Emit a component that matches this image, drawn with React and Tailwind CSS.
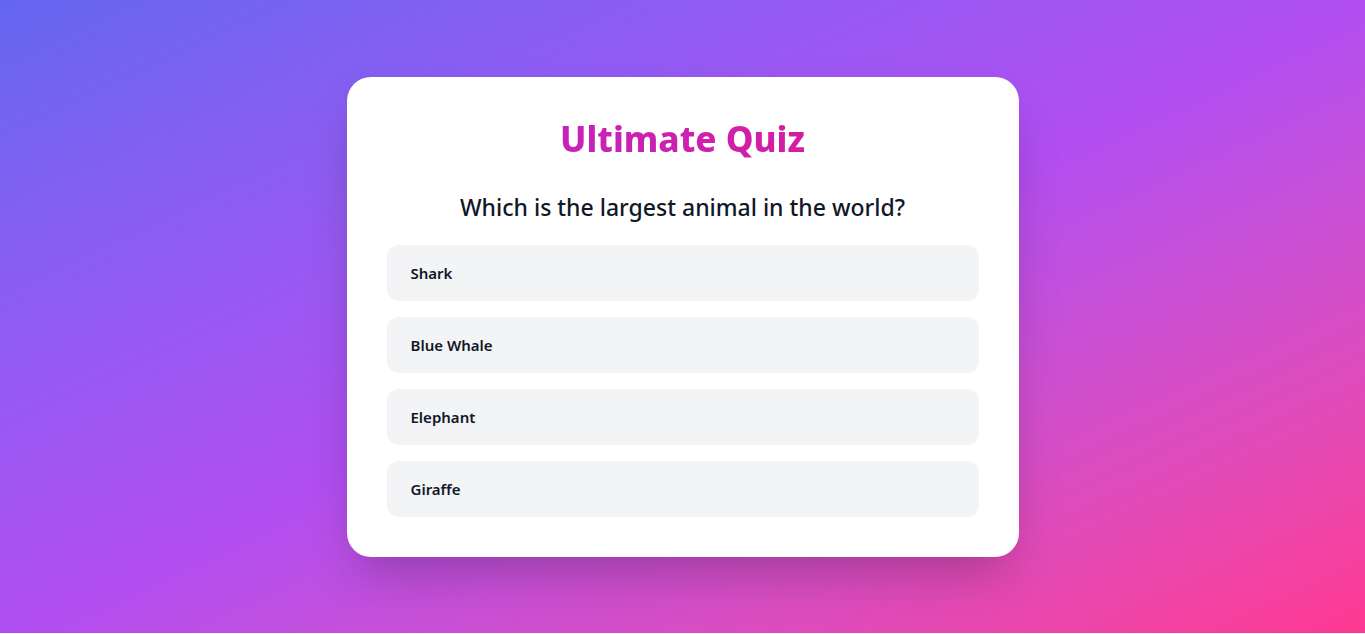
import React, { useState } from 'react';

const options = ['Shark', 'Blue Whale', 'Elephant', 'Giraffe'];

export default function App() {
  const [picked, setPicked] = useState(null);

  return (
    <div className="bg-[#2a2a2e]" style={{ fontFamily: '"Segoe UI", "Noto Sans", "Open Sans", sans-serif' }}>
      <div className="h-[633px] flex items-center justify-center bg-gradient-to-br from-[#6366f1] via-[#b14ef2] to-[#ff3892]">
        <div className="w-[672px] bg-white rounded-3xl shadow-2xl p-10">
          <h1 className="mt-[2px] text-[35px] font-extrabold text-center mb-8 leading-10 bg-gradient-to-r from-[#bb1fcc] to-[#e0108f] bg-clip-text text-transparent">
            Ultimate Quiz
          </h1>
          <h2 className="text-[23px] font-medium text-center text-[#111827] mb-[22px] leading-8">
            Which is the largest animal in the world?
          </h2>
          <div className="flex flex-col gap-4">
            {options.map((opt) => (
              <button
                key={opt}
                onClick={() => setPicked(opt)}
                className={`w-full text-left px-6 py-4 rounded-xl bg-[#f3f4f6] text-[15px] leading-6 font-semibold text-[#111827] ${picked === opt ? 'ring-2 ring-purple-400' : ''}`}
              >
                {opt}
              </button>
            ))}
          </div>
        </div>
      </div>
    </div>
  );
}
